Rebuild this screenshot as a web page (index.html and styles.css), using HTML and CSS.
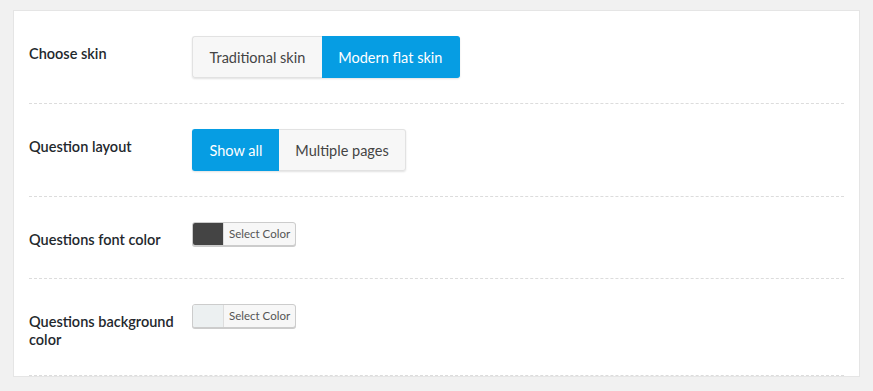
FILE: index.html
```html
<!DOCTYPE html>
<html lang="en">
<head>
    <meta charset="UTF-8">
    <meta name="viewport" content="width=device-width, initial-scale=1.0">
    <title>Quiz Appearance</title>
    <link rel="stylesheet" href="styles.css">
</head>
<body>
    <div class="panel">
        <div class="row">
            <div class="label">Choose skin</div>
            <div class="field">
                <div class="btn-group">
                    <button type="button" class="btn">Traditional skin</button>
                    <button type="button" class="btn active">Modern flat skin</button>
                </div>
            </div>
        </div>

        <div class="row">
            <div class="label">Question layout</div>
            <div class="field">
                <div class="btn-group">
                    <button type="button" class="btn active">Show all</button>
                    <button type="button" class="btn">Multiple pages</button>
                </div>
            </div>
        </div>

        <div class="row">
            <div class="label">Questions font color</div>
            <div class="field">
                <button type="button" class="color-result">
                    <span class="swatch swatch-dark"></span>
                    <span class="color-text">Select Color</span>
                </button>
            </div>
        </div>

        <div class="row">
            <div class="label">Questions background color</div>
            <div class="field">
                <button type="button" class="color-result">
                    <span class="swatch swatch-light"></span>
                    <span class="color-text">Select Color</span>
                </button>
            </div>
        </div>
    </div>
</body>
</html>
```

FILE: styles.css
```css
body {
    font-family: Lato, "Noto Sans", sans-serif;
    font-size: 14px;
    margin: 0;
    padding: 10px 13px 0;
    background: #f1f1f1;
    color: #23282d;
}
.panel {
    width: 815px;
    padding: 0 15px;
    background: #fff;
    border: 1px solid #e5e5e5;
}
.row {
    display: flex;
    align-items: flex-start;
    border-bottom: 1px dashed #dcdcdc;
}
.label {
    width: 163px;
    padding: 34px 0 29px;
    line-height: 18px;
    font-size: 14.5px;
    font-weight: 600;
}
.row:last-child .label {
    padding-bottom: 26px;
}
.field {
    padding: 25px 0;
}
.btn-group {
    display: flex;
    border-radius: 3px;
    box-shadow: 0 1px 2px rgba(0, 0, 0, 0.12);
}
.btn {
    font-family: inherit;
    font-size: 14.5px;
    height: 42px;
    padding: 0 16.5px;
    margin: 0;
    background: #f7f7f7;
    color: #444;
    border: 1px solid #e2e2e2;
    cursor: pointer;
}
.btn:first-child {
    border-radius: 3px 0 0 3px;
    border-right: none;
}
.btn:last-child {
    border-radius: 0 3px 3px 0;
    border-left: none;
}
.btn.active {
    background: #069de3;
    border-color: #069de3;
    color: #fff;
}
.color-result {
    display: flex;
    height: 24px;
    padding: 0;
    margin: 0;
    font-family: inherit;
    border: 1px solid #ccc;
    border-radius: 3px;
    box-shadow: 0 1px 0 #ccc;
    background: #f7f7f7;
    overflow: hidden;
    cursor: pointer;
}
.swatch {
    width: 30px;
    height: 100%;
}
.swatch-dark {
    background: #444;
}
.swatch-light {
    background: #ecf0f1;
}
.color-text {
    font-size: 11.5px;
    line-height: 22px;
    padding: 0 5px;
    color: #555;
    border-left: 1px solid #ddd;
}
```
